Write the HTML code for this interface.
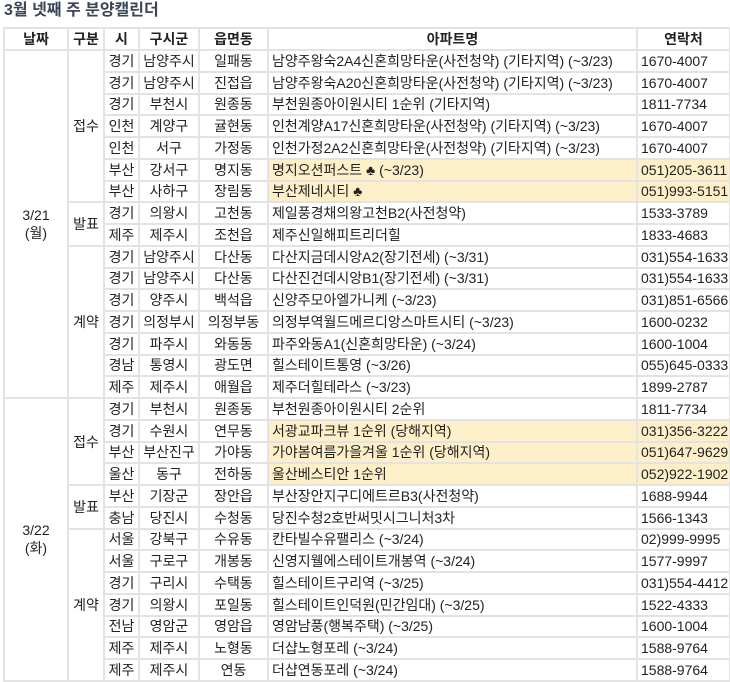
<!DOCTYPE html>
<html><head><meta charset="utf-8"><style>
body{margin:0;background:#fff;font-family:"Liberation Sans","Noto Sans CJK KR",sans-serif;}
h1{position:absolute;left:4px;top:0;margin:0;font-size:16px;font-weight:bold;color:#3a4656;line-height:22px;}
table{position:absolute;left:3px;top:27px;border-collapse:collapse;table-layout:fixed;width:726px;font-size:14px;color:#222;}
td,th{border:2px solid #e3e3e3;padding:0 3px;height:19.75px;line-height:18px;white-space:nowrap;overflow:hidden;}
th{height:20px;font-weight:bold;text-align:center;}
td.c{text-align:center;padding:0 1px;}
td.y{background:#fdf0c9;}
</style></head><body>
<h1>3월 넷째 주 분양캘린더</h1>
<table>
<colgroup><col style="width:64px"><col style="width:36px"><col style="width:35px"><col style="width:60px"><col style="width:69px"><col style="width:369px"><col style="width:93px"></colgroup>
<tr><th>날짜</th><th>구분</th><th>시</th><th>구시군</th><th>읍면동</th><th>아파트명</th><th>연락처</th></tr>
<tr><td class="c" rowspan="16">3/21<br>(월)</td><td class="c" rowspan="7">접수</td><td class="c">경기</td><td class="c">남양주시</td><td class="c">일패동</td><td>남양주왕숙2A4신혼희망타운(사전청약) (기타지역) (~3/23)</td><td>1670-4007</td></tr>
<tr><td class="c">경기</td><td class="c">남양주시</td><td class="c">진접읍</td><td>남양주왕숙A20신혼희망타운(사전청약) (기타지역) (~3/23)</td><td>1670-4007</td></tr>
<tr><td class="c">경기</td><td class="c">부천시</td><td class="c">원종동</td><td>부천원종아이원시티 1순위 (기타지역)</td><td>1811-7734</td></tr>
<tr><td class="c">인천</td><td class="c">계양구</td><td class="c">귤현동</td><td>인천계양A17신혼희망타운(사전청약) (기타지역) (~3/23)</td><td>1670-4007</td></tr>
<tr><td class="c">인천</td><td class="c">서구</td><td class="c">가정동</td><td>인천가정2A2신혼희망타운(사전청약) (기타지역) (~3/23)</td><td>1670-4007</td></tr>
<tr><td class="c">부산</td><td class="c">강서구</td><td class="c">명지동</td><td class="y">명지오션퍼스트 ♣ (~3/23)</td><td class="y">051)205-3611</td></tr>
<tr><td class="c">부산</td><td class="c">사하구</td><td class="c">장림동</td><td class="y">부산제네시티 ♣</td><td class="y">051)993-5151</td></tr>
<tr><td class="c" rowspan="2">발표</td><td class="c">경기</td><td class="c">의왕시</td><td class="c">고천동</td><td>제일풍경채의왕고천B2(사전청약)</td><td>1533-3789</td></tr>
<tr><td class="c">제주</td><td class="c">제주시</td><td class="c">조천읍</td><td>제주신일해피트리더힐</td><td>1833-4683</td></tr>
<tr><td class="c" rowspan="7">계약</td><td class="c">경기</td><td class="c">남양주시</td><td class="c">다산동</td><td>다산지금데시앙A2(장기전세) (~3/31)</td><td>031)554-1633</td></tr>
<tr><td class="c">경기</td><td class="c">남양주시</td><td class="c">다산동</td><td>다산진건데시앙B1(장기전세) (~3/31)</td><td>031)554-1633</td></tr>
<tr><td class="c">경기</td><td class="c">양주시</td><td class="c">백석읍</td><td>신양주모아엘가니케 (~3/23)</td><td>031)851-6566</td></tr>
<tr><td class="c">경기</td><td class="c">의정부시</td><td class="c">의정부동</td><td>의정부역월드메르디앙스마트시티 (~3/23)</td><td>1600-0232</td></tr>
<tr><td class="c">경기</td><td class="c">파주시</td><td class="c">와동동</td><td>파주와동A1(신혼희망타운) (~3/24)</td><td>1600-1004</td></tr>
<tr><td class="c">경남</td><td class="c">통영시</td><td class="c">광도면</td><td>힐스테이트통영 (~3/26)</td><td>055)645-0333</td></tr>
<tr><td class="c">제주</td><td class="c">제주시</td><td class="c">애월읍</td><td>제주더힐테라스 (~3/23)</td><td>1899-2787</td></tr>
<tr><td class="c" rowspan="13">3/22<br>(화)</td><td class="c" rowspan="4">접수</td><td class="c">경기</td><td class="c">부천시</td><td class="c">원종동</td><td>부천원종아이원시티 2순위</td><td>1811-7734</td></tr>
<tr><td class="c">경기</td><td class="c">수원시</td><td class="c">연무동</td><td class="y">서광교파크뷰 1순위 (당해지역)</td><td class="y">031)356-3222</td></tr>
<tr><td class="c">부산</td><td class="c">부산진구</td><td class="c">가야동</td><td class="y">가야봄여름가을겨울 1순위 (당해지역)</td><td class="y">051)647-9629</td></tr>
<tr><td class="c">울산</td><td class="c">동구</td><td class="c">전하동</td><td class="y">울산베스티안 1순위</td><td class="y">052)922-1902</td></tr>
<tr><td class="c" rowspan="2">발표</td><td class="c">부산</td><td class="c">기장군</td><td class="c">장안읍</td><td>부산장안지구디에트르B3(사전청약)</td><td>1688-9944</td></tr>
<tr><td class="c">충남</td><td class="c">당진시</td><td class="c">수청동</td><td>당진수청2호반써밋시그니처3차</td><td>1566-1343</td></tr>
<tr><td class="c" rowspan="7">계약</td><td class="c">서울</td><td class="c">강북구</td><td class="c">수유동</td><td>칸타빌수유팰리스 (~3/24)</td><td>02)999-9995</td></tr>
<tr><td class="c">서울</td><td class="c">구로구</td><td class="c">개봉동</td><td>신영지웰에스테이트개봉역 (~3/24)</td><td>1577-9997</td></tr>
<tr><td class="c">경기</td><td class="c">구리시</td><td class="c">수택동</td><td>힐스테이트구리역 (~3/25)</td><td>031)554-4412</td></tr>
<tr><td class="c">경기</td><td class="c">의왕시</td><td class="c">포일동</td><td>힐스테이트인덕원(민간임대) (~3/25)</td><td>1522-4333</td></tr>
<tr><td class="c">전남</td><td class="c">영암군</td><td class="c">영암읍</td><td>영암남풍(행복주택) (~3/25)</td><td>1600-1004</td></tr>
<tr><td class="c">제주</td><td class="c">제주시</td><td class="c">노형동</td><td>더샵노형포레 (~3/24)</td><td>1588-9764</td></tr>
<tr><td class="c">제주</td><td class="c">제주시</td><td class="c">연동</td><td>더샵연동포레 (~3/24)</td><td>1588-9764</td></tr>
</table>
</body></html>
